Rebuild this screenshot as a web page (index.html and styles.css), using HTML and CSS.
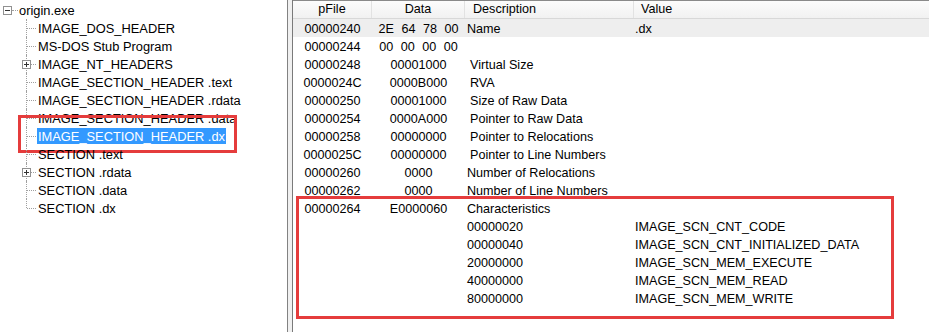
FILE: index.html
```html
<!DOCTYPE html>
<html lang="en">
<head>
	<meta charset="utf-8">
	<title>PEview - origin.exe</title>
	<link rel="stylesheet" href="styles.css">
</head>
<body>
<div class="app">
	<div class="tree">
		<div class="root"><span class="box minus"></span><span class="stub"></span><span class="label">origin.exe</span></div>
		<ul class="kids">
			<li><span class="label">IMAGE_DOS_HEADER</span></li>
			<li><span class="label">MS-DOS Stub Program</span></li>
			<li><span class="box plus"></span><span class="label">IMAGE_NT_HEADERS</span></li>
			<li><span class="label">IMAGE_SECTION_HEADER .text</span></li>
			<li><span class="label">IMAGE_SECTION_HEADER .rdata</span></li>
			<li><span class="label">IMAGE_SECTION_HEADER .data</span></li>
			<li class="sel"><span class="label">IMAGE_SECTION_HEADER .dx</span><span class="mark"></span></li>
			<li><span class="label">SECTION .text</span></li>
			<li><span class="box plus"></span><span class="label">SECTION .rdata</span></li>
			<li><span class="label">SECTION .data</span></li>
			<li><span class="label">SECTION .dx</span></li>
		</ul>
	</div>
	<div class="splitter"></div>
	<div class="list">
		<div class="row head">
			<span class="c1">pFile</span><span class="c2">Data</span><span class="c3">Description</span><span class="c4">Value</span>
		</div>
		<div class="row current">
			<span class="c1">00000240</span><span class="c2 bytes">2E 64 78 00</span><span class="c3">Name</span><span class="c4">.dx</span>
		</div>
		<div class="row">
			<span class="c1">00000244</span><span class="c2 bytes">00 00 00 00</span><span class="c3"></span><span class="c4"></span>
		</div>
		<div class="row">
			<span class="c1">00000248</span><span class="c2">00001000</span><span class="c3 dw">Virtual Size</span><span class="c4"></span>
		</div>
		<div class="row">
			<span class="c1">0000024C</span><span class="c2">0000B000</span><span class="c3 dw">RVA</span><span class="c4"></span>
		</div>
		<div class="row">
			<span class="c1">00000250</span><span class="c2">00001000</span><span class="c3 dw">Size of Raw Data</span><span class="c4"></span>
		</div>
		<div class="row">
			<span class="c1">00000254</span><span class="c2">0000A000</span><span class="c3 dw">Pointer to Raw Data</span><span class="c4"></span>
		</div>
		<div class="row">
			<span class="c1">00000258</span><span class="c2">00000000</span><span class="c3 dw">Pointer to Relocations</span><span class="c4"></span>
		</div>
		<div class="row">
			<span class="c1">0000025C</span><span class="c2">00000000</span><span class="c3 dw">Pointer to Line Numbers</span><span class="c4"></span>
		</div>
		<div class="row">
			<span class="c1">00000260</span><span class="c2">0000</span><span class="c3">Number of Relocations</span><span class="c4"></span>
		</div>
		<div class="row">
			<span class="c1">00000262</span><span class="c2">0000</span><span class="c3">Number of Line Numbers</span><span class="c4"></span>
		</div>
		<div class="group">
			<div class="row">
				<span class="c1">00000264</span><span class="c2">E0000060</span><span class="c3">Characteristics</span><span class="c4"></span>
			</div>
			<div class="row">
				<span class="c1"></span><span class="c2"></span><span class="c3">00000020</span><span class="c4">IMAGE_SCN_CNT_CODE</span>
			</div>
			<div class="row">
				<span class="c1"></span><span class="c2"></span><span class="c3">00000040</span><span class="c4">IMAGE_SCN_CNT_INITIALIZED_DATA</span>
			</div>
			<div class="row">
				<span class="c1"></span><span class="c2"></span><span class="c3">20000000</span><span class="c4">IMAGE_SCN_MEM_EXECUTE</span>
			</div>
			<div class="row">
				<span class="c1"></span><span class="c2"></span><span class="c3">40000000</span><span class="c4">IMAGE_SCN_MEM_READ</span>
			</div>
			<div class="row">
				<span class="c1"></span><span class="c2"></span><span class="c3">80000000</span><span class="c4">IMAGE_SCN_MEM_WRITE</span>
			</div>
			<span class="mark"></span>
		</div>
	</div>
</div>
</body>
</html>
```
FILE: styles.css
```css
*	{margin:0;padding:0;box-sizing:border-box;}
body	{font-family:"Liberation Sans", Arial, sans-serif;color:#000;background-color:#fff;overflow:hidden;}
.app	{display:flex;height:332px;}

/* tree */
.tree	{width:288px;flex:none;padding-top:1px;border-right:1px solid #828282;font-size:12.85px;}
.tree .root	{display:flex;align-items:center;height:18px;padding-left:3px;}
.tree .stub	{width:6px;border-top:1px dotted #a0a0a0;}
.tree .label	{display:block;height:16px;line-height:16px;padding:1px 1px 0;white-space:nowrap;}
.tree .kids	{list-style:none;margin-left:26px;}
.tree .kids li	{position:relative;display:flex;align-items:center;height:18px;padding-left:11px;}
.tree .kids li::before	{content:'';position:absolute;left:0;top:0;bottom:0;border-left:1px dotted #a0a0a0;}
.tree .kids li:last-child::before	{bottom:9px;}
.tree .kids li::after	{content:'';position:absolute;left:1px;top:9px;width:9px;border-top:1px dotted #a0a0a0;}
.tree .kids li .box	{position:absolute;left:-4px;top:5px;z-index:1;}
.tree .sel .label	{background-color:#3399ff;color:#fff;}
.tree .sel .mark	{position:absolute;left:-8px;top:-12px;width:219px;height:38px;border:3px solid #e53c3c;}

.box	{position:relative;width:9px;height:9px;flex:none;border:1px solid #919191;background-color:#fff;}
.box::before	{content:'';position:absolute;left:1px;top:3px;width:5px;height:1px;background-color:#333;}
.plus::after	{content:'';position:absolute;left:3px;top:1px;width:1px;height:5px;background-color:#333;}

.splitter	{width:4px;flex:none;background-color:#f0f0f0;}

/* list */
.list	{flex:1;border-left:1px solid #7a7a7a;font-size:12.6px;}
.row	{display:grid;grid-template-columns:79px 93px 169px 1fr;align-items:center;height:18px;padding-top:2px;white-space:nowrap;}
.row .c1, .row .c2	{text-align:center;}
.row .c3	{padding-left:2px;}
.row .c3.dw	{padding-left:5px;}
.row .c4	{padding-left:1px;}
.row .bytes	{word-spacing:4px;}
.row.head	{height:19px;padding-top:0;border-top:1px solid #8a8a8a;border-bottom:1px solid #d8d8d8;background:linear-gradient(#fcfcfc, #f1f1f1);}
.row.head span	{height:100%;line-height:17px;border-right:1px solid #e2e2e2;}
.row.head .c3	{padding-left:8px;}
.row.head .c4	{padding-left:7px;border-right:0;}
.row.current	{background-color:#eeeeee;}
.group	{position:relative;}
.group .mark	{position:absolute;left:3px;top:-3px;width:598px;bottom:-12px;border:3px solid #e53c3c;}
```
